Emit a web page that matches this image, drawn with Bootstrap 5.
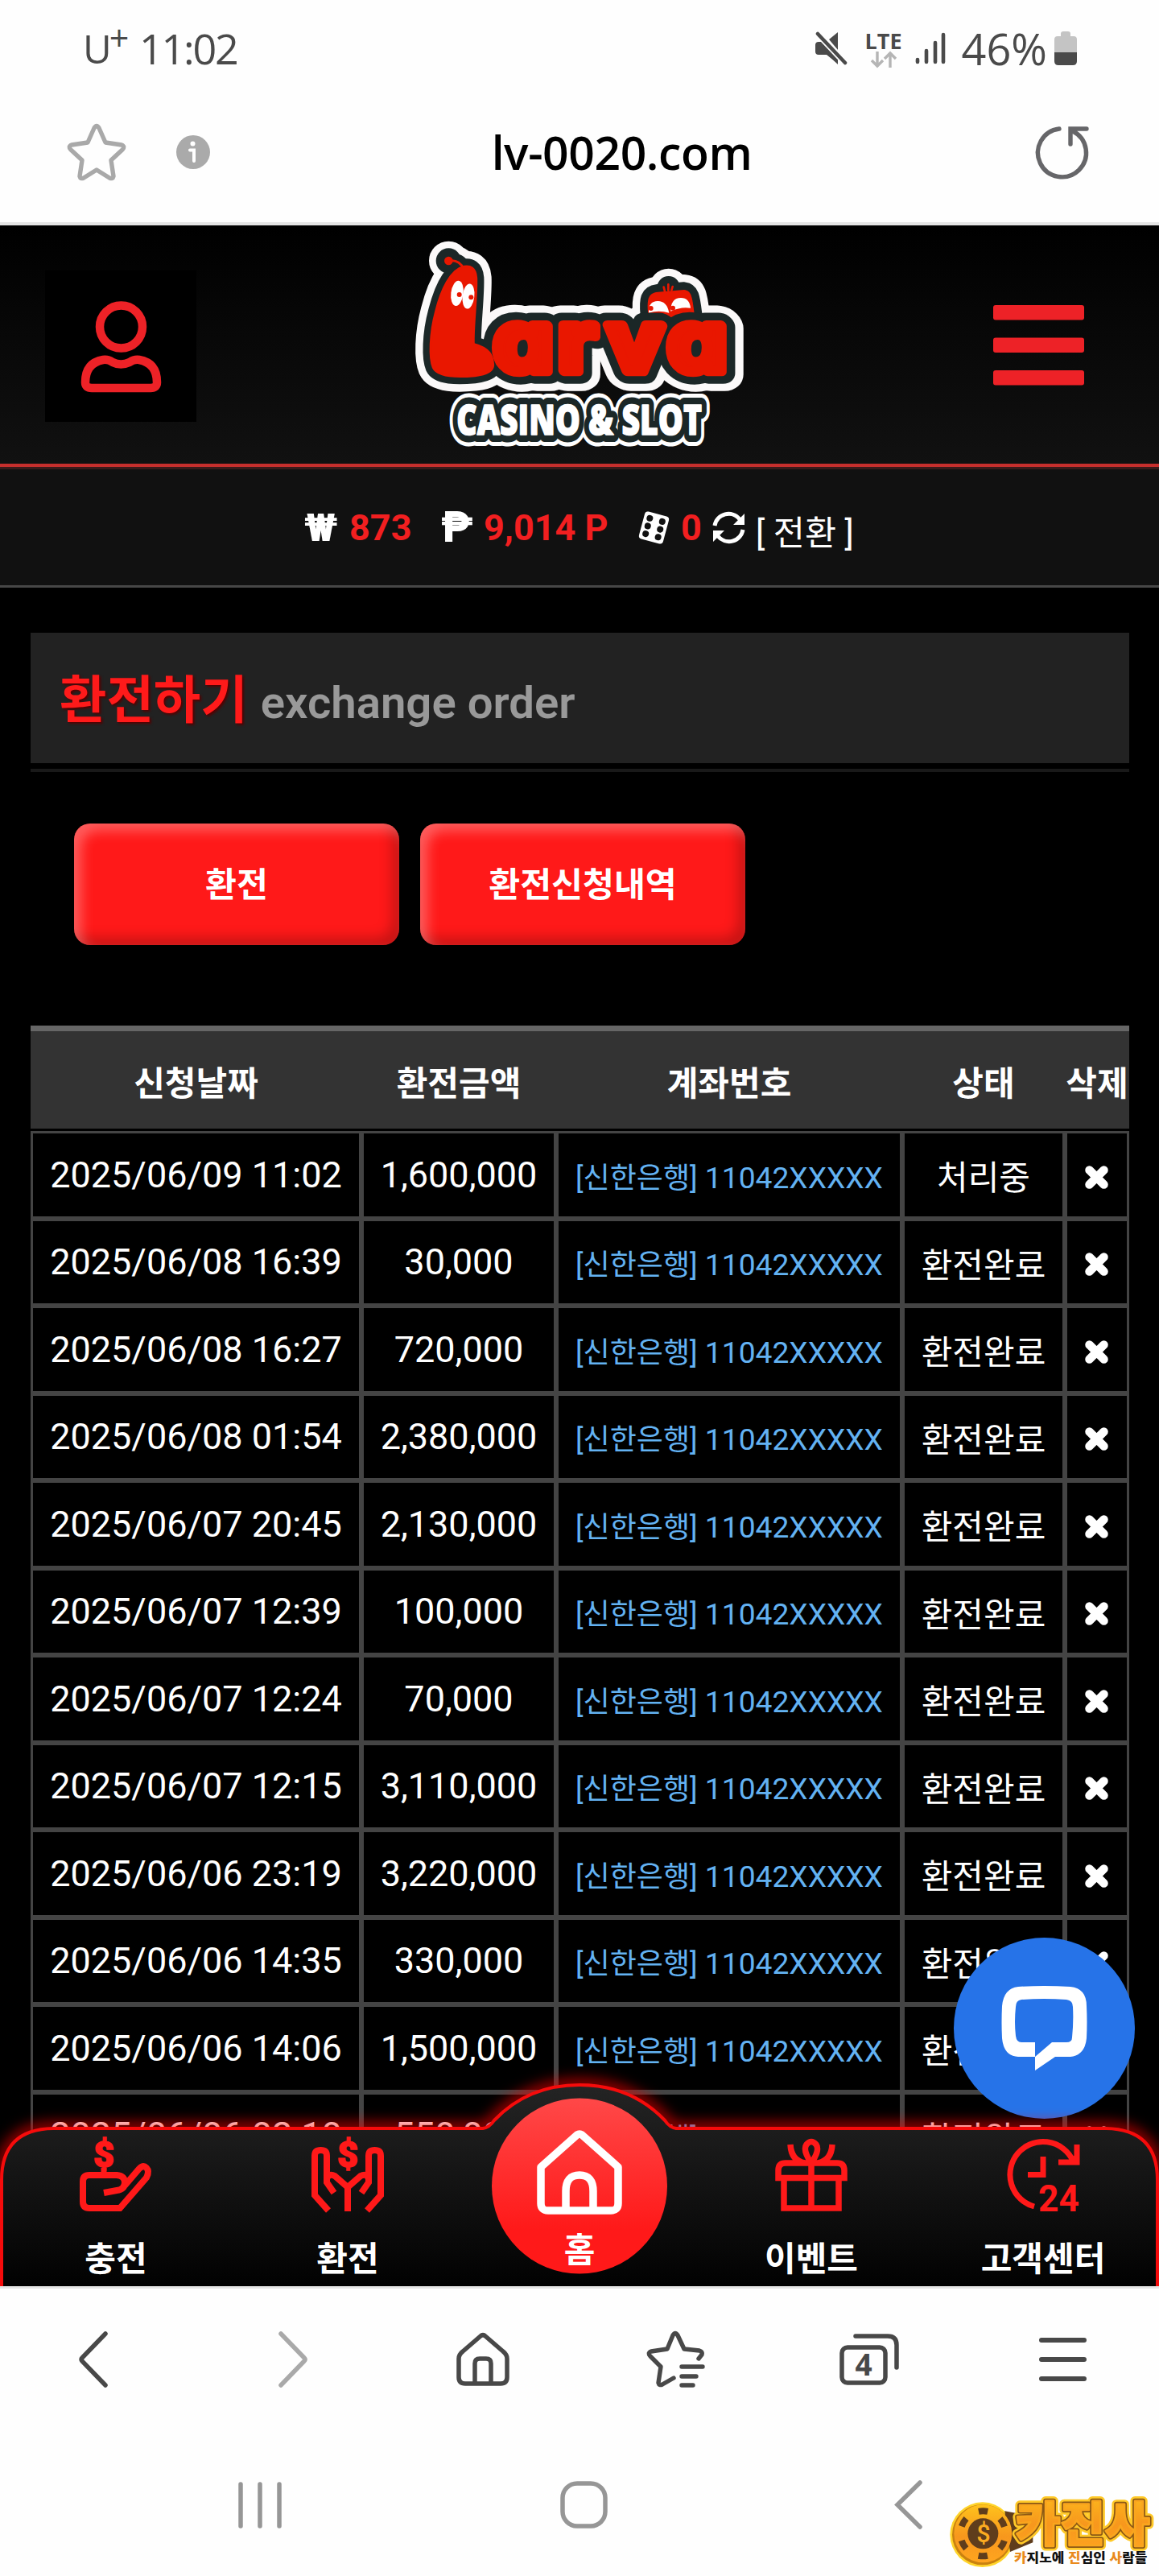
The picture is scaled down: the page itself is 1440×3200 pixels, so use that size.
<!DOCTYPE html>
<html lang="ko">

<head>
    <meta charset="UTF-8">
    <meta name="viewport" content="width=device-width, initial-scale=1.0">
    <title>환전하기 - Larva Casino &amp; Slot</title>
    <!-- Bootstrap CSS -->
    <link href="https://cdn.jsdelivr.net/npm/bootstrap@5.3.0/dist/css/bootstrap.min.css" rel="stylesheet">
    <style>
        body {
            width: 1440px;
            height: 3200px;
            overflow: hidden;
            background-color: #fefefe;
            font-family: Roboto, "Noto Sans CJK KR", sans-serif;
            line-height: 1;
        }

        svg {
            display: block;
            flex-shrink: 0;
            overflow: visible;
        }

        .status-bar {
            height: 120px;
            padding: 0 102px 0 103px;
            color: #4a4a4a;
            font-family: "Open Sans", sans-serif;
        }

        .status-time {
            font-size: 52px;
            letter-spacing: -2.2px;
        }

        .battery-level {
            font-size: 54px;
            margin-left: 20px;
        }

        .battery-icon {
            margin-left: 9px;
        }

        .carrier {
            font-size: 49px;
            width: 70px;
        }

        .carrier sup {
            font-size: 43px;
            top: -.36em;
            margin-left: -3px;
        }

        .lte-box {
            margin-left: 22px;
        }

        .lte-label {
            font-size: 27px;
            font-weight: 700;
            height: 27px;
        }

        .address-bar {
            height: 160px;
            padding: 0 86px 18px 84px;
            border-bottom: 4px solid #e4e4e4;
        }

        .info-icon {
            margin-left: 63px;
        }

        .address-url {
            font-family: "Open Sans", sans-serif;
            font-size: 57px;
            font-weight: 600;
            letter-spacing: -.4px;
            padding: 1px 4px 0 0;
            color: #000;
        }

        .site-header {
            height: 300px;
            margin-bottom: 3px;
            padding: 0 93px 0 56px;
            background: linear-gradient(#000, #111);
            border-bottom: 4px solid #c62f2d;
            box-shadow: 0 3px 0 #3a1b1b;
        }

        .user-box {
            width: 188px;
            height: 188px;
            background-color: #000;
            margin-top: 4px;
        }

        .menu-icon {
            margin-top: 2px;
        }

        .site-logo {
            margin: -6px 38px 0 0;
        }

        .balance-bar {
            height: 147px;
            padding: 0 0 0 378px;
            background-color: #111;
            border-bottom: 3px solid #474747;
            font-size: 45px;
            font-weight: 700;
            color: #fff;
        }

        .balance-bar .amount {
            color: #f21f20;
        }

        .w-won { width: 56px; font-size: 49px; font-weight: 900; }
        .w-cash { width: 114px; }
        .w-peso { width: 53px; font-size: 53px; font-weight: 900; }
        .w-point { width: 191px; }
        .w-dice { width: 54px; }
        .w-zero { width: 39px; }
        .w-sync { width: 54px; }

        .convert {
            font-size: 42.5px;
            font-weight: 400;
            padding-top: 17px;
        }

        .page-area {
            height: 2110px;
            background-color: #000;
            padding: 56px 37px 0 38px;
        }

        .page-title {
            height: 162px;
            background-color: #222;
            padding: 0 36px;
        }

        .title-line {
            height: 4px;
            margin-top: 7px;
            background-color: #191919;
        }

        .title-ko {
            font-size: 63.5px;
            font-weight: 700;
            color: #ff1a1a;
            text-shadow: 2px 2px 3px #500;
            padding-top: 7px;
        }

        .title-en {
            font-size: 56.3px;
            font-weight: 600;
            color: #999;
            margin-left: 16px;
            padding-top: 12px;
        }

        .tab-btn {
            width: 404px;
            height: 151px;
            border: 0;
            border-radius: 20px;
            background-color: #ff1919;
            box-shadow: inset 9px 9px 16px rgba(255, 255, 255, .3), inset -9px -9px 16px rgba(0, 0, 0, .22);
            color: #fff;
            font-size: 42.3px;
            font-weight: 700;
            padding-top: 8px;
        }

        .tab-btn:hover {
            color: #fff;
            background-color: #ff1919;
        }

        .tab-row {
            margin: 64px 0 100px 54px;
            gap: 26px;
        }

        .order-table {
            width: 1365px;
            table-layout: fixed;
            border-collapse: separate;
            border-spacing: 0;
            text-align: center;
            color: #fff;
            white-space: nowrap;
        }

        .order-table th {
            height: 128px;
            padding: 11px 0 0;
            border-top: 7px solid #666;
            background-color: #333;
            font-size: 42px;
            text-align: center;
        }

        .order-table th:nth-child(1) { width: 411px; }
        .order-table th:nth-child(2) { width: 242px; }
        .order-table th:nth-child(3) { width: 430px; }
        .order-table th:nth-child(4) { width: 202px; }
        .order-table th:nth-child(5) { width: 80px; }

        .order-table .spacer td {
            height: 3px;
            padding: 0;
            border: 0;
        }

        .order-table td {
            height: 108.5px;
            padding: 0;
            border: 3px solid #444;
            vertical-align: middle;
            line-height: 50px;
        }

        .date-cell,
        .money-cell {
            font-size: 45px;
        }

        .order-table .date-cell,
        .order-table .money-cell {
            padding-top: 1px;
        }

        .account {
            font-size: 37.2px;
            color: #63b2f2;
            padding-top: 8px;
        }

        .account small {
            font-size: 36px;
        }

        .state {
            font-size: 42px;
            padding-top: 10px;
        }

        .order-table td svg {
            margin: 6px auto 0 21px;
        }

        .site-nav {
            height: 252px;
            bottom: 0;
            left: 0;
            color: #fff;
            font-size: 42px;
            font-weight: 700;
        }

        .site-nav .nav-bg {
            left: 0;
            bottom: 0;
        }

        .nav-cell {
            width: 288px;
            padding-top: 69px;
            gap: 39px;
            color: #fff;
        }

        .nav-home {
            padding-top: 59px;
            gap: 24px;
        }

        .chat-btn {
            width: 225px;
            height: 225px;
            right: 30px;
            bottom: 208px;
            background-color: #2673e8;
        }

        .browser-bar {
            height: 180px;
            padding-bottom: 2px;
            border-top: 3px solid #e6e6e6;
        }

        .browser-bar > div {
            width: 240px;
        }

        .browser-bar > .back-cell {
            padding-right: 8px;
        }

        .system-bar {
            height: 180px;
            padding: 0 111px 0 122px;
            margin-top: 1px;
        }

        .system-bar > div {
            width: 402px;
            height: 181px;
        }

        .site-mark {
            right: 0;
            bottom: 0;
        }
    </style>
</head>

<body>
    <!-- Status bar -->
    <div class="status-bar d-flex align-items-center">
        <span class="carrier">U<sup>+</sup></span>
        <span class="status-time me-auto">11:02</span>
        <svg width="40" height="42" viewBox="0 0 40 42" fill="#4a4a4a">
            <path d="M0 17q0-4 4-4h6l7 7 11 20L14 29H4q-4 0-4-4zM17 10 28 1v22z" />
            <path d="M14 28 28 41V24L8 12z" />
            <path d="M3 3 37 39" stroke="#fefefe" stroke-width="8" />
            <path d="M3 3 37 39" stroke="#4a4a4a" stroke-width="4.5" stroke-linecap="round" />
        </svg>
        <div class="lte-box d-flex flex-column align-items-center">
            <span class="lte-label">LTE</span>
            <svg width="32" height="20" viewBox="0 0 32 20" fill="none" stroke="#b5b5b5" stroke-width="3.4">
                <path d="M8 0v18M1 11l7 7 7-7M24 20V2M17 9l7-7 7 7" />
            </svg>
        </div>
        <svg class="ms-3" width="38" height="40" viewBox="0 0 38 40" stroke="#4a4a4a" stroke-width="4.6" stroke-linecap="round">
            <path d="M3 34v3M14 23v14M25 13v24M35 3v34" />
        </svg>
        <span class="battery-level">46%</span>
        <svg class="battery-icon" width="28" height="42" viewBox="0 0 28 42">
            <path d="M8 6V3q0-3 3-3h6q3 0 3 3v3h4q4 0 4 4v16H0V10q0-4 4-4z" fill="#c4c4c4" />
            <path d="M0 26h28v11q0 5-5 5H5q-5 0-5-5z" fill="#4a4a4a" />
        </svg>
    </div>

    <!-- Address bar -->
    <div class="address-bar d-flex align-items-center">
        <svg width="72" height="70" viewBox="0 0 72 70" fill="none" stroke="#a9a9a9" stroke-width="5.4" stroke-linejoin="round">
            <path d="M33 5q3-5 6 0l8 18 20 3q5 2 1 6L54 45l3 20q-1 4-5 2L36 57 20 67q-4 2-5-2l3-20L4 32q-4-4 1-6l20-3z" />
        </svg>
        <svg class="info-icon" width="42" height="42" viewBox="0 0 42 42">
            <circle cx="21" cy="21" r="21" fill="#aaa" />
            <circle cx="20.500" cy="10.500" r="3" fill="#fff" />
            <path d="M17 18.500h5V32" fill="none" stroke="#fff" stroke-width="4" stroke-linecap="round" />
        </svg>
        <span class="address-url flex-grow-1 text-center">lv-0020.com</span>
        <svg width="66" height="66" viewBox="0 0 66 66" fill="none" stroke="#666669" stroke-width="5.400" stroke-linecap="round">
            <path d="M28 4A30 30 0 1 0 45 7M62 4H42V23" />
        </svg>
    </div>

    <!-- Site header -->
    <header class="site-header d-flex align-items-center justify-content-between position-relative">
        <div class="user-box d-flex align-items-center justify-content-center">
            <svg width="99" height="113" viewBox="0 0 99 113" fill="none" stroke="#ed2227" stroke-width="10.500">
                <circle cx="49.500" cy="32" r="26.500" />
                <path d="M27 73q-22 4-22 28 0 7 8 7h73q8 0 8-7 0-24-22-28-6-1-12 3-11 5-21 0-6-4-12-3z" stroke-linejoin="round" />
            </svg>
        </div>
        <svg class="site-logo" width="480" height="290" viewBox="0 0 1440 870" stroke-linejoin="round" stroke-linecap="round" role="img" aria-label="Larva Casino &amp; Slot">
            <defs>
                <g id="worm">
                    <path d="M290 154C240 165 205 240 185 320 162 405 160 495 175 530 192 566 265 566 330 560 375 555 398 542 398 520 396 485 385 458 325 442 322 380 338 260 335 195 332 158 312 150 290 154z" />
                    <path d="M232 132q40-6 56 30" fill="none" />
                </g>
                <path id="wormHead" d="M976 335C970 275 975 252 1012 248L1110 240C1136 243 1140 262 1148 330L1062 372z" />
                <g id="larvaText" font-family="Inter" font-style="italic" font-weight="700" font-size="312" transform="translate(0 543) scale(1.12 1) skewX(9.4)">
                    <text x="372 586 748 950" y="0">arva</text>
                </g>
                <text id="slotText" x="262" y="780" font-family="Open Sans" font-weight="800" font-size="156" textLength="914" lengthAdjust="spacingAndGlyphs">CASINO &amp; SLOT</text>
            </defs>
            <g fill="#fbf9f9" stroke="#fbf9f9" stroke-width="114">
                <use href="#worm" /><use href="#wormHead" /><use href="#larvaText" stroke-width="148" />
                <circle cx="232" cy="132" r="16" />
                <circle cx="1052" cy="232" r="14" />
            </g>
            <g fill="#1b2727" stroke="#1b2727" stroke-width="58">
                <use href="#worm" /><use href="#wormHead" />
                <circle cx="232" cy="132" r="18" />
                <circle cx="1052" cy="232" r="14" />
            </g>
            <use href="#wormHead" fill="#e91700" />
            <path d="M1038 246l-4-16M1051 242V220M1063 242l4-14" stroke="#e91700" stroke-width="8" />
            <path d="M978 326q-2-44 34-44 34 0 42 44-38-12-76 0zM1060 320q0-50 38-50 32 0 36 38-36-6-74 12z" fill="#fff" />
            <circle cx="986" cy="309" r="9" fill="#e91700" /><circle cx="1068" cy="308" r="9" fill="#e91700" />
            <use href="#larvaText" fill="#1b2727" stroke="#1b2727" stroke-width="94" />
            <use href="#larvaText" fill="#e91700" stroke="#e91700" stroke-width="38" />
            <use href="#worm" fill="#e91700" stroke="#e91700" stroke-width="9" />
            <circle cx="232" cy="132" r="16" fill="#e91700" />
            <g fill="#fff">
                <ellipse cx="264" cy="253" rx="23" ry="47" transform="rotate(7 264 253)" />
                <ellipse cx="306" cy="264" rx="22" ry="47" transform="rotate(7 306 264)" />
            </g>
            <circle cx="272" cy="258" r="9" fill="#e91700" /><circle cx="316" cy="268" r="9" fill="#e91700" />
            <use href="#slotText" stroke="#fff" stroke-width="84" />
            <use href="#slotText" stroke="#1b2727" stroke-width="54" />
            <use href="#slotText" fill="#fff" stroke="#fff" stroke-width="5" />
        </svg>
        <svg class="menu-icon" width="113" height="100" viewBox="0 0 113 100" fill="#ed2227">
            <rect width="113" height="18.500" rx="3" />
            <rect y="40.500" width="113" height="18.500" rx="3" />
            <rect y="81" width="113" height="18.500" rx="3" />
        </svg>
    </header>

    <!-- Balance -->
    <div class="balance-bar d-flex align-items-center">
        <span class="w-won">₩</span>
        <span class="amount w-cash">873</span>
        <span class="w-peso">₱</span>
        <span class="amount w-point">9,014 P</span>
        <div class="w-dice">
            <svg width="41" height="41" viewBox="0 0 41 41">
                <g transform="rotate(15 20.500 20.500)">
                    <rect x="5" y="3" width="31" height="35" rx="4" fill="#fff" />
                    <g fill="#111">
                        <circle cx="12.500" cy="10.500" r="4" /><circle cx="12.500" cy="20.500" r="4" /><circle cx="12.500" cy="30.500" r="4" />
                        <circle cx="28.500" cy="10.500" r="4" /><circle cx="28.500" cy="20.500" r="4" /><circle cx="28.500" cy="30.500" r="4" />
                    </g>
                </g>
            </svg>
        </div>
        <span class="amount w-zero">0</span>
        <div class="w-sync">
            <svg width="41" height="41" viewBox="0 0 41 41" fill="none" stroke="#fff" stroke-width="5">
                <path d="M3 18A17.500 17.500 0 0 1 34 10M38 23A17.500 17.500 0 0 1 7 31" />
                <path d="M40 3V17H26zM1 38V24H15z" fill="#fff" stroke="none" />
            </svg>
        </div>
        <span class="convert">[ 전환 ]</span>
    </div>

    <!-- Exchange history -->
    <main class="page-area position-relative overflow-hidden">
        <div class="page-title d-flex align-items-center">
            <span class="title-ko">환전하기</span>
            <span class="title-en">exchange order</span>
        </div>
        <div class="title-line"></div>

        <div class="tab-row d-flex">
            <button class="btn tab-btn">환전</button>
            <button class="btn tab-btn">환전신청내역</button>
        </div>

        <table class="order-table">
            <thead>
                <tr>
                    <th>신청날짜</th>
                    <th>환전금액</th>
                    <th>계좌번호</th>
                    <th>상태</th>
                    <th>삭제</th>
                </tr>
                <tr class="spacer">
                    <td colspan="5"></td>
                </tr>
            </thead>
            <tbody id="orderList"></tbody>
        </table>

        <!-- Live chat -->
        <div class="chat-btn position-absolute rounded-circle d-flex align-items-center justify-content-center">
            <svg width="105" height="105" viewBox="0 0 105 105" fill="#fff" fill-rule="evenodd">
                <path d="M20 1Q52-1 85 1 105 3 105 25q1 20 0 40-2 21-20 23H66L41 105V88H20Q2 87 0 65-1 45 0 25 2 3 20 1zM24 17q-7 1-7 9-2 19 0 36 1 8 7 8H41V88L62 70H80q7 0 7-6 2-19 1-38 0-8-8-9-28-2-56 0z" />
            </svg>
        </div>

        <!-- Bottom navigation -->
        <nav class="site-nav position-absolute d-flex w-100">
            <svg class="nav-bg position-absolute" width="1440" height="252" viewBox="0 0 1440 252">
                <defs>
                    <linearGradient id="barFill" x1="0" y1="0" x2="0" y2="1">
                        <stop offset="0" stop-color="#242424" />
                        <stop offset="1" stop-color="#000" />
                    </linearGradient>
                    <linearGradient id="homeFill" x1="0" y1="0" x2="0" y2="1">
                        <stop offset="0" stop-color="#ff4848" />
                        <stop offset=".75" stop-color="#ff1919" />
                    </linearGradient>
                    <filter id="redGlow" x="-5%" y="-30%" width="110%" height="160%">
                        <feGaussianBlur stdDeviation="9" />
                    </filter>
                    <path id="barShape" d="M2 262V120Q2 57 66 56H600Q608 55 614 46 656 2 720 2T826 46Q832 55 840 56H1374Q1438 57 1438 120V262z" />
                </defs>
                <use href="#barShape" fill="none" stroke="red" stroke-width="10" filter="url(#redGlow)" />
                <use href="#barShape" fill="url(#barFill)" stroke="#f60b0b" stroke-width="4" />
                <circle cx="720" cy="127.500" r="109" fill="url(#homeFill)" />
            </svg>
            <a class="nav-cell position-relative d-flex flex-column align-items-center text-decoration-none" href="#">
                <svg width="90" height="90" viewBox="0 0 90 90" fill="none" stroke="#ff1919" stroke-width="8">
                    <text x="30" y="35" font-size="45" font-weight="900" text-anchor="middle" fill="#ff1919" stroke="#ff1919" stroke-width="1.500">$</text>
                    <path d="M30 36v9" stroke-width="7" />
                    <path d="M56 58 74 37q5-5 9-1t0 12L50 86H12q-8 0-8-8V53q0-8 8-8H46q10 1 10 9 0 9-10 10L30 67" />
                </svg>
                <span>충전</span>
            </a>
            <a class="nav-cell position-relative d-flex flex-column align-items-center text-decoration-none" href="#">
                <svg width="90" height="90" viewBox="0 0 90 90" fill="none" stroke="#ff1919" stroke-width="8">
                    <text x="45" y="35" font-size="45" font-weight="900" text-anchor="middle" fill="#ff1919" stroke="#ff1919" stroke-width="1.500">$</text>
                    <path d="M21 89 4 70V21q0-7 7.500-7T19 21V54L28 67M19 50q2-8 10-4L45 60V90M69 89 86 70V21q0-7-7.500-7T71 21V54L62 67M71 50q-2-8-10-4L45 60" />
                </svg>
                <span>환전</span>
            </a>
            <a class="nav-cell nav-home position-relative d-flex flex-column align-items-center text-decoration-none" href="#">
                <svg width="106" height="104" viewBox="0 0 106 104" fill="none" stroke="#fff" stroke-width="9.500" stroke-linejoin="round">
                    <path d="M50 5q3-2 6 0L101 45V90q0 9-9 9H14q-9 0-9-9V45zM36 98V75q0-20 17-20t17 20V98" />
                </svg>
                <span>홈</span>
            </a>
            <a class="nav-cell position-relative d-flex flex-column align-items-center text-decoration-none" href="#">
                <svg width="90" height="90" viewBox="0 0 90 90" fill="none" stroke="#ff1919" stroke-width="7.500">
                    <path d="M4 48.500V39q0-9 9-9H77q9 0 9 9v9.500zM11 48V86H79V48M45 30V86M45 30Q34 14 39 7q6-7 12 0 5 7-6 23zM19 7q1 20 18 23M71 7q-1 20-18 23" />
                </svg>
                <span>이벤트</span>
            </a>
            <a class="nav-cell position-relative d-flex flex-column align-items-center text-decoration-none" href="#">
                <svg width="90" height="90" viewBox="0 0 90 90" fill="none" stroke="#ff1919" stroke-width="7">
                    <path d="M34 84A41 41 0 1 1 82 27M87 7V29H64M45 22V44.500H26" />
                    <path d="M87 18V32H70z" fill="#ff1919" stroke="none" />
                    <text x="39" y="90" font-size="46" font-weight="700" textLength="51" lengthAdjust="spacingAndGlyphs" fill="#ff1919" stroke="none">24</text>
                </svg>
                <span>고객센터</span>
            </a>
        </nav>
    </main>

    <!-- Browser toolbar -->
    <div class="browser-bar d-flex align-items-center">
        <div class="back-cell d-flex justify-content-center">
            <svg width="37" height="70" viewBox="0 0 37 70" fill="none" stroke="#484848" stroke-width="5.500" stroke-linecap="round">
                <path d="M33 3 4 33q-2 2 0 4L33 67" />
            </svg>
        </div>
        <div class="d-flex justify-content-center">
            <svg width="37" height="70" viewBox="-3 0 37 70" fill="none" stroke="#a9a9a9" stroke-width="5.500" stroke-linecap="round">
                <path d="M4 3 33 33q2 2 0 4L4 67" />
            </svg>
        </div>
        <div class="d-flex justify-content-center">
            <svg width="66" height="66" viewBox="0 0 66 66" fill="none" stroke="#484848" stroke-width="5.500" stroke-linejoin="round">
                <path d="M30 4q3-3 6 0L58 23q5 4 5 9V55q0 8-8 8H11q-8 0-8-8V32q0-5 5-9zM23 62V38q0-6 6-6h8q6 0 6 6V62" />
            </svg>
        </div>
        <div class="d-flex justify-content-center">
            <svg width="72" height="70" viewBox="0 0 72 70" fill="none" stroke="#484848" stroke-width="5.400" stroke-linejoin="round" stroke-linecap="round">
                <path d="M64 34l4-5q1-4-3-5L46 22 38 5q-3-5-6 0L25 22 5 25q-5 2-1 6L17 44 14 64q1 4 5 2l14-8M43 44H69M43 56H61M43 67H57" />
            </svg>
        </div>
        <div class="d-flex justify-content-center">
            <svg width="74" height="64" viewBox="0 0 74 64" fill="none" stroke="#484848" stroke-width="5.500" stroke-linecap="round">
                <rect x="3" y="17" width="54" height="44" rx="7" />
                <path d="M20 3H60q11 0 11 11V42" />
                <text x="30" y="52" font-family="Open Sans" font-size="37" font-weight="700" text-anchor="middle" fill="#484848" stroke="none">4</text>
            </svg>
        </div>
        <div class="d-flex justify-content-center">
            <svg width="59" height="56" viewBox="0 0 59 56" stroke="#484848" stroke-width="6" stroke-linecap="round">
                <path d="M3 4H56M3 28H56M3 52H56" />
            </svg>
        </div>
    </div>

    <!-- System navigation -->
    <div class="system-bar d-flex">
        <div class="d-flex align-items-center justify-content-center">
            <svg width="54" height="58" viewBox="0 0 54 58" stroke="#969696" stroke-width="5.500" stroke-linecap="round">
                <path d="M3 3V55M27 3V55M51 3V55" />
            </svg>
        </div>
        <div class="d-flex align-items-center justify-content-center">
            <svg width="59" height="59" viewBox="0 0 59 59" fill="none" stroke="#969696" stroke-width="5.500">
                <rect x="3" y="3" width="53" height="53" rx="18" />
            </svg>
        </div>
        <div class="d-flex align-items-center justify-content-center">
            <svg width="34" height="61" viewBox="-2 0 34 61" fill="none" stroke="#969696" stroke-width="5.500" stroke-linecap="round">
                <path d="M31 3 3 30.500 31 58" />
            </svg>
        </div>
    </div>

    <!-- Community mark over the corner -->
    <div class="site-mark position-absolute">
        <svg width="270" height="110" viewBox="0 0 810 330">
            <defs>
                <linearGradient id="gold" x1="0" y1="0" x2="0" y2="1">
                    <stop offset="0" stop-color="#ffc21c" />
                    <stop offset=".55" stop-color="#f7971d" />
                    <stop offset="1" stop-color="#ffa51f" />
                </linearGradient>
            </defs>
            <circle cx="152" cy="176" r="121" fill="#ffd42a" />
            <circle cx="152" cy="176" r="113" fill="#c9810f" />
            <path d="M235 88 340 108 340 205 255 240z" fill="#5f3d1c" />
            <g font-family="Noto Sans CJK KR" font-weight="900" font-size="178" stroke-linejoin="round">
                <text x="276" y="202" textLength="500" lengthAdjust="spacingAndGlyphs" fill="#5f3d1c" stroke="#ffc928" stroke-width="34">카진사</text>
                <text x="276" y="202" textLength="500" lengthAdjust="spacingAndGlyphs" fill="#5f3d1c" stroke="#8a5715" stroke-width="18">카진사</text>
                <text x="276" y="202" textLength="500" lengthAdjust="spacingAndGlyphs" fill="url(#gold)" stroke="#f9a51e" stroke-width="8">카진사</text>
            </g>
            <circle cx="154" cy="172" r="108" fill="url(#gold)" />
            <circle cx="154" cy="172" r="84" fill="none" stroke="#5f3d1c" stroke-width="24" stroke-dasharray="34 53.960" stroke-dashoffset="-27" />
            <circle cx="154" cy="172" r="57" fill="#5f3d1c" />
            <text x="156" y="204" font-size="92" font-weight="500" text-anchor="middle" fill="#fbab20">$</text>
            <text x="270" y="280" font-family="Noto Sans CJK KR" font-weight="900" font-size="48" textLength="496" lengthAdjust="spacingAndGlyphs" fill="#111"><tspan fill="#e98a1c">카</tspan>지노에 <tspan fill="#e98a1c">진</tspan>심인 <tspan fill="#e98a1c">사</tspan>람들</text>
        </svg>
    </div>

    <!-- Bootstrap JS -->
    <script src="https://cdn.jsdelivr.net/npm/bootstrap@5.3.0/dist/js/bootstrap.bundle.min.js"></script>
    <script>
        const orders = [
            ['2025/06/09 11:02', '1,600,000', '처리중'],
            ['2025/06/08 16:39', '30,000', '환전완료'],
            ['2025/06/08 16:27', '720,000', '환전완료'],
            ['2025/06/08 01:54', '2,380,000', '환전완료'],
            ['2025/06/07 20:45', '2,130,000', '환전완료'],
            ['2025/06/07 12:39', '100,000', '환전완료'],
            ['2025/06/07 12:24', '70,000', '환전완료'],
            ['2025/06/07 12:15', '3,110,000', '환전완료'],
            ['2025/06/06 23:19', '3,220,000', '환전완료'],
            ['2025/06/06 14:35', '330,000', '환전완료'],
            ['2025/06/06 14:06', '1,500,000', '환전완료'],
            ['2025/06/06 02:10', '550,000', '환전완료']
        ];

        function showOrders() {
            document.getElementById('orderList').innerHTML = orders.map(([date, money, state]) => `
                <tr>
                    <td class="date-cell">${date}</td>
                    <td class="money-cell">${money}</td>
                    <td><div class="account"><small>[신한은행]</small> 11042XXXXX</div></td>
                    <td><div class="state">${state}</div></td>
                    <td>
                        <svg width="31" height="31" viewBox="0 0 31 31" stroke="#fff" stroke-width="10.500" stroke-linecap="round">
                            <path d="M6.500 6.500 24.500 24.500M24.500 6.500 6.500 24.500" />
                        </svg>
                    </td>
                </tr>`).join('');
        }

        showOrders();
    </script>
</body>

</html>
